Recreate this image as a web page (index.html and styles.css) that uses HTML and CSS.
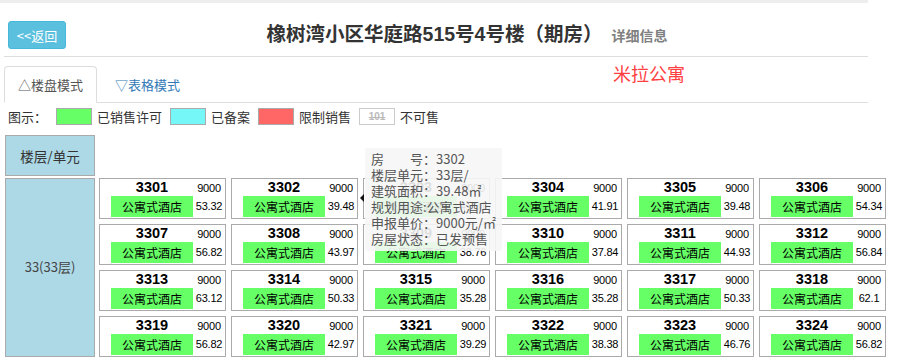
FILE: index.html
```html
<!DOCTYPE html>
<html lang="zh-CN">
<head>
<meta charset="utf-8">
<title>橡树湾小区华庭路515号4号楼（期房）</title>
<link rel="stylesheet" href="styles.css">
</head>
<body>
<div class="topbar"></div>
<div class="page">
  <div class="head">
    <a class="btn-back">&lt;&lt;返回</a>
    <h3 class="title">橡树湾小区华庭路515号4号楼（期房）<small>详细信息</small></h3>
  </div>
  <div class="tabs">
    <div class="tab active">△楼盘模式</div>
    <div class="tab link">▽表格模式</div>
    <span class="project">米拉公寓</span>
  </div>
  <div class="legend">
    <span class="legend-title">图示：</span>
    <span class="swatch green"></span><span class="legend-text">已销售许可</span>
    <span class="swatch cyan"></span><span class="legend-text">已备案</span>
    <span class="swatch red"></span><span class="legend-text">限制销售</span>
    <span class="swatch blank"><s>101</s></span><span class="legend-text">不可售</span>
  </div>
  <div class="board">
    <div class="floor-head">楼层/单元</div>
    <div class="floor-row">
      <div class="floor-label">33(33层)</div>
      <div class="units">
        <div class="unit"><b class="no">3301</b><span class="price">9000</span><span class="use">公寓式酒店</span><span class="area">53.32</span></div>
        <div class="unit"><b class="no">3302</b><span class="price">9000</span><span class="use">公寓式酒店</span><span class="area">39.48</span></div>
        <div class="unit"><b class="no">3303</b><span class="price">9000</span><span class="use">公寓式酒店</span><span class="area">41.91</span></div>
        <div class="unit"><b class="no">3304</b><span class="price">9000</span><span class="use">公寓式酒店</span><span class="area">41.91</span></div>
        <div class="unit"><b class="no">3305</b><span class="price">9000</span><span class="use">公寓式酒店</span><span class="area">39.48</span></div>
        <div class="unit"><b class="no">3306</b><span class="price">9000</span><span class="use">公寓式酒店</span><span class="area">54.34</span></div>
        <div class="unit"><b class="no">3307</b><span class="price">9000</span><span class="use">公寓式酒店</span><span class="area">56.82</span></div>
        <div class="unit"><b class="no">3308</b><span class="price">9000</span><span class="use">公寓式酒店</span><span class="area">43.97</span></div>
        <div class="unit"><b class="no">3309</b><span class="price">9000</span><span class="use">公寓式酒店</span><span class="area">38.76</span></div>
        <div class="unit"><b class="no">3310</b><span class="price">9000</span><span class="use">公寓式酒店</span><span class="area">37.84</span></div>
        <div class="unit"><b class="no">3311</b><span class="price">9000</span><span class="use">公寓式酒店</span><span class="area">44.93</span></div>
        <div class="unit"><b class="no">3312</b><span class="price">9000</span><span class="use">公寓式酒店</span><span class="area">56.84</span></div>
        <div class="unit"><b class="no">3313</b><span class="price">9000</span><span class="use">公寓式酒店</span><span class="area">63.12</span></div>
        <div class="unit"><b class="no">3314</b><span class="price">9000</span><span class="use">公寓式酒店</span><span class="area">50.33</span></div>
        <div class="unit"><b class="no">3315</b><span class="price">9000</span><span class="use">公寓式酒店</span><span class="area">35.28</span></div>
        <div class="unit"><b class="no">3316</b><span class="price">9000</span><span class="use">公寓式酒店</span><span class="area">35.28</span></div>
        <div class="unit"><b class="no">3317</b><span class="price">9000</span><span class="use">公寓式酒店</span><span class="area">50.33</span></div>
        <div class="unit"><b class="no">3318</b><span class="price">9000</span><span class="use">公寓式酒店</span><span class="area">62.1</span></div>
        <div class="unit"><b class="no">3319</b><span class="price">9000</span><span class="use">公寓式酒店</span><span class="area">56.82</span></div>
        <div class="unit"><b class="no">3320</b><span class="price">9000</span><span class="use">公寓式酒店</span><span class="area">42.97</span></div>
        <div class="unit"><b class="no">3321</b><span class="price">9000</span><span class="use">公寓式酒店</span><span class="area">39.29</span></div>
        <div class="unit"><b class="no">3322</b><span class="price">9000</span><span class="use">公寓式酒店</span><span class="area">38.38</span></div>
        <div class="unit"><b class="no">3323</b><span class="price">9000</span><span class="use">公寓式酒店</span><span class="area">46.76</span></div>
        <div class="unit"><b class="no">3324</b><span class="price">9000</span><span class="use">公寓式酒店</span><span class="area">56.82</span></div>
        <div class="tip">
          <i class="tip-arrow"></i>
          <div>房　　号：3302</div>
          <div>楼层单元：33层/</div>
          <div>建筑面积：39.48㎡</div>
          <div>规划用途:公寓式酒店</div>
          <div>申报单价：9000元/㎡</div>
          <div>房屋状态：已发预售</div>
        </div>
      </div>
    </div>
  </div>
</div>
</body>
</html>
```
FILE: styles.css
```css
* { box-sizing: border-box; }
html, body { margin: 0; padding: 0; background: #fff; }
body {
  font-family: "Liberation Sans", "Noto Sans CJK SC", sans-serif;
  color: #333;
  font-size: 13px;
  width: 898px;
  height: 361px;
  overflow: hidden;
}
.topbar { width: 868px; height: 3px; background: #eee; }
.page { width: 864px; margin-left: 4px; }

.head {
  display: flex;
  align-items: center;
  padding: 17px 0 6px 4px;
  border-bottom: 1px solid #ddd;
}
.btn-back {
  display: flex;
  align-items: center;
  justify-content: center;
  width: 58px;
  height: 28px;
  background: #5bc0de;
  border: 1px solid #46b8da;
  border-radius: 3px;
  color: #fff;
  font-size: 13px;
  font-family: "Noto Sans CJK SC", sans-serif;
}
.title {
  flex: 1;
  margin: 0;
  text-align: center;
  font-family: "Liberation Sans", "Noto Sans CJK SC", sans-serif;
  font-weight: bold;
  font-size: 19.5px;
  color: #333;
  line-height: 28px;
}
.title small {
  font-size: 14px;
  color: #808080;
  margin-left: 9px;
  font-weight: bold;
}

.tabs {
  display: flex;
  margin-top: 9px;
  border-bottom: 1px solid #ddd;
  font-family: "Noto Sans CJK SC", sans-serif;
}
.tab {
  padding: 8px 13px;
  line-height: 19px;
  font-size: 13px;
  border: 1px solid transparent;
  border-radius: 4px 4px 0 0;
  margin-bottom: -1px;
}
.tab.active {
  border-color: #ddd;
  border-bottom-color: #fff;
  color: #555;
  background: #fff;
}
.tab.link { margin-left: 2px; padding: 8px 15px; color: #337ab7; }
.project {
  align-self: flex-start;
  margin-top: -3px;
  margin-left: 417px;
  font-size: 18px;
  line-height: 20px;
  color: #ff4040;
}

.legend {
  display: flex;
  align-items: center;
  height: 17px;
  margin: 5px 0 10px 4px;
  font-family: "Noto Sans CJK SC", sans-serif;
  font-size: 13px;
  color: #333;
}
.legend-title { width: 48px; }
.swatch {
  flex-shrink: 0;
  width: 36px;
  height: 17px;
  border: 1px solid #aaa;
  margin-right: 5px;
}
.swatch.green { background: #66ff66; }
.swatch.cyan { background: #75f7f8; }
.swatch.red { background: #ff6666; }
.swatch.blank {
  display: flex;
  align-items: center;
  justify-content: center;
  background: #fff;
  border-color: #ccc;
  font-family: "Liberation Sans", sans-serif;
  font-size: 10px;
  font-weight: bold;
  color: #bbb;
}
.legend-text { margin-right: 8px; }

.board { margin-left: 1px; font-family: "Noto Sans CJK SC", sans-serif; }
.floor-head {
  width: 90px;
  height: 41px;
  display: flex;
  align-items: center;
  justify-content: center;
  background: #add8e6;
  border: 1px solid #aaa;
  font-size: 13.5px;
  color: #333;
}
.floor-row { display: flex; margin-top: 2px; width: 890px; }
.floor-label {
  flex: 0 0 90px;
  width: 90px;
  display: flex;
  align-items: center;
  justify-content: center;
  background: #add8e6;
  border: 1px solid #aaa;
  font-size: 13px;
  color: #444;
  padding-bottom: 2px;
}
.units {
  flex: 0 0 auto;
  position: relative;
  margin-left: 4px;
  display: grid;
  grid-template-columns: repeat(6, 127px);
  gap: 5px;
}
.unit {
  height: 41px;
  border: 1px solid #aaa;
  display: grid;
  grid-template-columns: 82px 1fr;
  grid-template-rows: 17px 21px;
  padding-left: 11px;
  background: #fff;
}
.no {
  font-family: "Liberation Sans", sans-serif;
  font-weight: bold;
  font-size: 14.5px;
  line-height: 17px;
  text-align: center;
  color: #000;
}
.price, .area {
  font-family: "Liberation Sans", sans-serif;
  font-size: 11px;
  text-align: center;
  color: #000;
  letter-spacing: -0.2px;
}
.price { line-height: 17px; padding-top: 1px; }
.area { line-height: 21px; }
.use {
  background: #66ff66;
  text-align: center;
  line-height: 21px;
  font-size: 12px;
  color: #000;
}

.tip {
  position: absolute;
  left: 266px;
  top: -30px;
  width: 137px;
  padding: 3px 0 4px 6px;
  background: rgba(246, 246, 246, 0.9);
  border-radius: 2px;
  font-family: "Noto Sans CJK SC", sans-serif;
  font-size: 13px;
  line-height: 16px;
  color: #555;
  white-space: nowrap;
}
.tip-arrow {
  position: absolute;
  left: -5px;
  top: 46px;
  width: 0;
  height: 0;
  border-top: 4px solid transparent;
  border-bottom: 4px solid transparent;
  border-right: 4px solid #111;
}
```
